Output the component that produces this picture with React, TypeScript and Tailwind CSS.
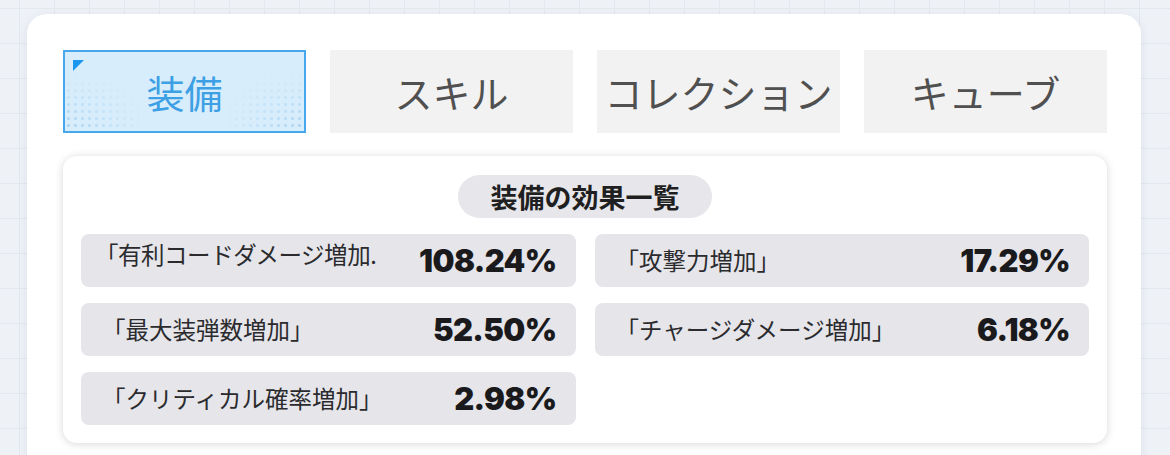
import React from "react";

const jp = "font-['Noto_Sans_CJK_JP','Noto_Sans',sans-serif]";
const num = "font-['Inter','Roboto',sans-serif]";

const tabs = ["装備", "スキル", "コレクション", "キューブ"];

const stats: { label: string; value: string; first?: boolean }[] = [
  { label: "「有利コードダメージ増加.", value: "108.24%", first: true },
  { label: "「攻撃力増加」", value: "17.29%" },
  { label: "「最大装弾数増加」", value: "52.50%" },
  { label: "「チャージダメージ増加」", value: "6.18%" },
  { label: "「クリティカル確率増加」", value: "2.98%" },
];

export default function App() {
  return (
    <div className="w-[1170px] h-[455px] overflow-hidden bg-[#eef2f7] bg-[linear-gradient(#e3e8ef_1px,transparent_1px),linear-gradient(90deg,#e3e8ef_1px,transparent_1px)] bg-[length:35px_35px] bg-[position:-16px_8px] pt-[14px] pl-[27px]">
      <div className="w-[1114px] rounded-[20px] bg-white shadow-[0_2px_10px_rgba(90,100,130,0.12)] pl-[36px] pr-[34px] pt-[36px] pb-[36px]">
        <div className="grid grid-cols-4 gap-[24px]">
          {tabs.map((t, i) =>
            i === 0 ? (
              <div
                key={t}
                className="relative h-[83px] border-2 border-[#47a7ec] bg-[#d7edfc] flex items-center justify-center overflow-hidden"
              >
                <div className="absolute inset-0 bg-[radial-gradient(circle,#a3d1f3_1.2px,transparent_1.7px)] bg-[length:7px_7px] [mask-image:linear-gradient(to_top,black_0%,transparent_75%)]" />
                <div className="absolute inset-0 bg-[linear-gradient(90deg,transparent_0%,#d7edfc_35%,#d7edfc_65%,transparent_100%)]" />
                <div className="absolute left-[8px] top-[8px] w-0 h-0 border-t-[11px] border-t-[#1c97ef] border-r-[11px] border-r-transparent" />
                <span className={`relative ${jp} text-[38px] text-[#3d9fe4] leading-none`}>{t}</span>
              </div>
            ) : (
              <div
                key={t}
                className="h-[83px] bg-[#f2f2f3] flex items-center justify-center"
              >
                <span className={`${jp} text-[38px] text-[#505050] leading-none whitespace-nowrap`}>{t}</span>
              </div>
            )
          )}
        </div>

        <div className="mt-[23px] rounded-[14px] bg-white shadow-[0_1px_9px_rgba(0,0,0,0.16)] px-[18px] pt-[19px] pb-[18px]">
          <div className="mx-auto w-[254px] h-[43px] rounded-full bg-[#e6e6eb] flex items-center justify-center">
            <span className={`${jp} font-bold text-[27px] text-[#1f1f22] leading-none`}>装備の効果一覧</span>
          </div>
          <div className="mt-[16px] grid grid-cols-2 gap-x-[19px] gap-y-[16px]">
            {stats.map((s) => (
              <div
                key={s.label}
                className="h-[53px] rounded-[8px] bg-[#e5e5ea] flex items-center justify-between pl-[21px] pr-[19px]"
              >
                <span
                  className={`${jp} text-[23.5px] text-[#2b2b2e] leading-none whitespace-nowrap ${s.first ? "-ml-[7px] -translate-y-[6px] tracking-[-0.02em]" : ""}`}
                >
                  {s.label}
                </span>
                <span className={`${num} font-black text-[31px] text-[#1a1a1d] leading-none tracking-[-0.02em]`}>
                  {s.value}
                </span>
              </div>
            ))}
          </div>
        </div>
      </div>
    </div>
  );
}
